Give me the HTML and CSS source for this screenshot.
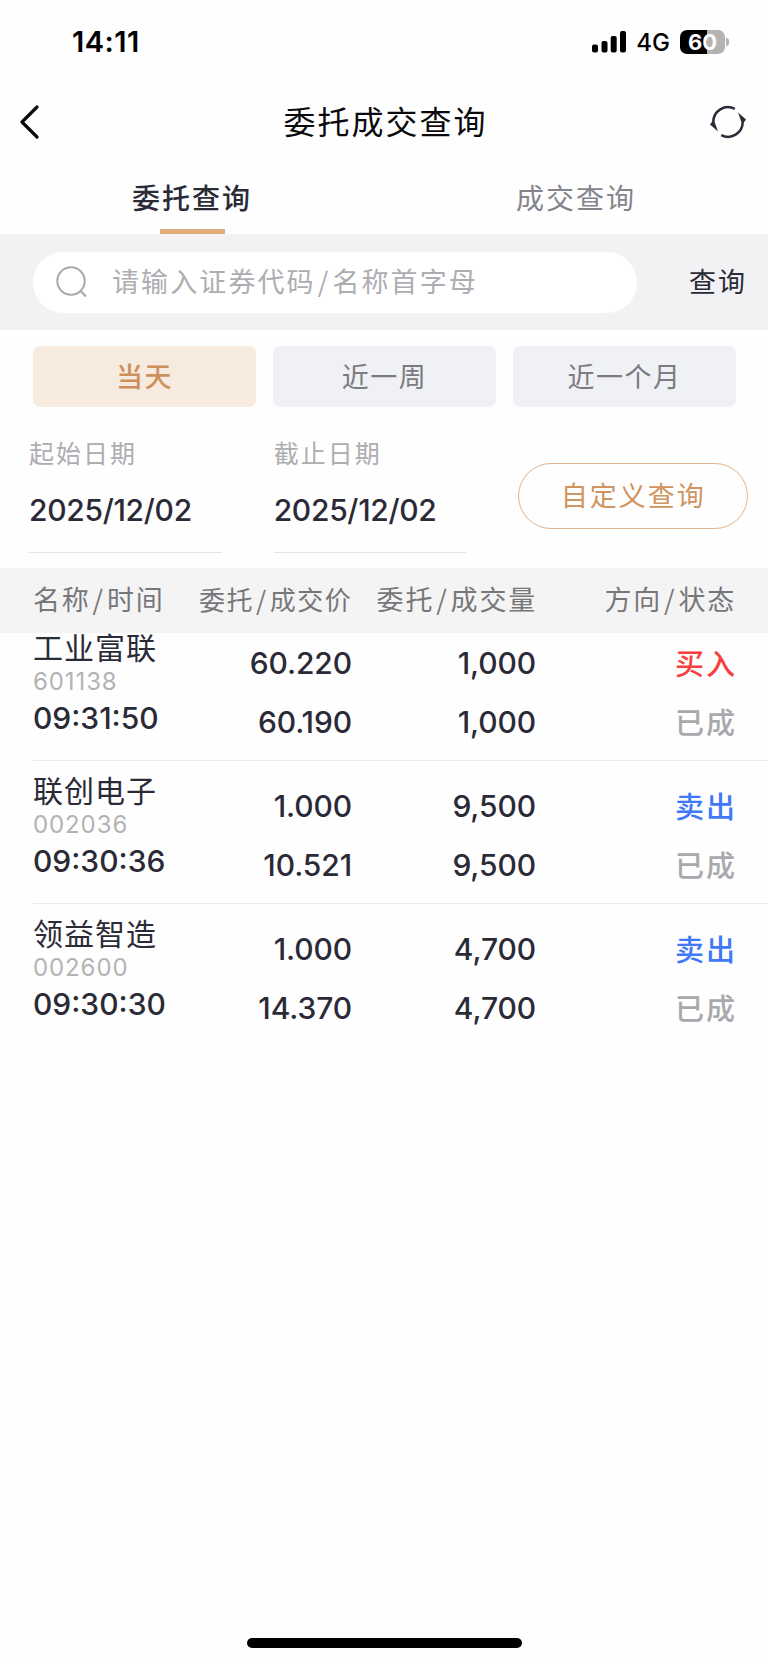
FILE: index.html
```
<!DOCTYPE html>
<html lang="zh-CN">
<head>
    <meta charset="UTF-8">
    <meta name="viewport" content="width=device-width, initial-scale=1.0">
    <title>委托成交查询</title>
    <link rel="stylesheet" href="styles.css">
</head>
<body>
    <div class="status-bar">
        <span class="clock">14:11</span>
        <div class="status-right">
            <svg class="signal" width="34" height="22" viewBox="0 0 34 22">
                <rect x="0" y="13.5" width="6" height="8" rx="2"/>
                <rect x="9.5" y="10" width="6" height="11.5" rx="2"/>
                <rect x="18.7" y="5" width="6" height="16.5" rx="2"/>
                <rect x="28" y="0" width="6" height="21.5" rx="2"/>
            </svg>
            <span class="network">4G</span>
            <div class="battery"><span>60</span></div>
            <div class="battery-cap"></div>
        </div>
    </div>

    <div class="nav-bar">
        <svg class="back" width="20" height="34" viewBox="0 0 20 34">
            <path d="M18 2 L3 17 L18 32" fill="none" stroke="#0a0a0c" stroke-width="3.2" stroke-linecap="round" stroke-linejoin="round"/>
        </svg>
        <h1>委托成交查询</h1>
        <svg class="refresh" width="40" height="36" viewBox="0 0 40 36">
            <path d="M5.3 18 A14.7 14.7 0 0 1 26.8 4.9" fill="none" stroke="#2b2a37" stroke-width="2.5"/>
            <path d="M34.7 18 A14.7 14.7 0 0 1 13.2 31.1" fill="none" stroke="#2b2a37" stroke-width="2.5"/>
            <path d="M30 8.6 L38 15.4 L35.8 18.4 L33.4 18 Z M10 27.4 L2 20.6 L4.2 17.6 L6.6 18 Z" fill="#2b2a37"/>
        </svg>
    </div>

    <div class="tabs">
        <div class="tab active">委托查询</div>
        <div class="tab">成交查询</div>
    </div>

    <div class="search-bar">
        <div class="search-box">
            <svg width="32" height="34" viewBox="0 0 32 34">
                <circle cx="15" cy="16" r="13.7" fill="none" stroke="#a9a9ae" stroke-width="2"/>
                <path d="M24 25.5 L30 31.5" stroke="#a9a9ae" stroke-width="2.2"/>
            </svg>
            <span class="placeholder">请输入证券代码<i>/</i>名称首字母</span>
        </div>
        <span class="search-btn">查询</span>
    </div>

    <div class="ranges">
        <div class="range active">当天</div>
        <div class="range">近一周</div>
        <div class="range">近一个月</div>
    </div>

    <div class="dates">
        <div class="date">
            <label>起始日期</label>
            <div class="value">2025/12/02</div>
        </div>
        <div class="date">
            <label>截止日期</label>
            <div class="value">2025/12/02</div>
        </div>
        <div class="custom-btn">自定义查询</div>
    </div>

    <div class="table-head">
        <span class="h-name">名称<i>/</i>时间</span>
        <span class="h-price">委托<i>/</i>成交价</span>
        <span class="h-amount">委托<i>/</i>成交量</span>
        <span class="h-side">方向<i>/</i>状态</span>
    </div>

    <div class="orders">
        <div class="order">
            <div class="stock">
                <div class="name">工业富联</div>
                <div class="code">601138</div>
                <div class="time">09:31:50</div>
            </div>
            <div class="num">60.220<br>60.190</div>
            <div class="num">1,000<br>1,000</div>
            <div class="side"><span class="buy">买入</span><br>已成</div>
        </div>
        <div class="order">
            <div class="stock">
                <div class="name">联创电子</div>
                <div class="code">002036</div>
                <div class="time">09:30:36</div>
            </div>
            <div class="num">1.000<br>10.521</div>
            <div class="num">9,500<br>9,500</div>
            <div class="side"><span class="sell">卖出</span><br>已成</div>
        </div>
        <div class="order">
            <div class="stock">
                <div class="name">领益智造</div>
                <div class="code">002600</div>
                <div class="time">09:30:30</div>
            </div>
            <div class="num">1.000<br>14.370</div>
            <div class="num">4,700<br>4,700</div>
            <div class="side"><span class="sell">卖出</span><br>已成</div>
        </div>
    </div>

    <div class="home-indicator"></div>
</body>
</html>
```

FILE: styles.css
```
* {
    box-sizing: border-box;
}

body {
    font-family: "Noto Sans CJK SC", "Inter", sans-serif;
    background: #fefefe;
    color: #2b2a37;
    width: 768px;
    height: 1664px;
    margin: 0;
    display: flex;
    flex-direction: column;
    overflow: hidden;
}

i {
    font-style: normal;
    margin: 0 2px;
}

/* Status bar */
.status-bar {
    height: 84px;
    display: flex;
    justify-content: space-between;
    padding: 0 39px 0 72px;
    font-family: "Inter", sans-serif;
    color: #000;
}

.clock {
    font-size: 29px;
    font-weight: 600;
    letter-spacing: 0.5px;
    line-height: 84px;
}

.status-right {
    display: flex;
    align-items: center;
    height: 83px;
}

.network {
    font-size: 24px;
    font-weight: 500;
    margin: 2px 10px 0 10px;
}

.battery {
    width: 45px;
    height: 24px;
    border-radius: 7px;
    background: linear-gradient(to right, #000 59%, #b3b3b3 59%);
    color: #fff;
    font-size: 22px;
    font-weight: 700;
    line-height: 24px;
    text-align: center;
}

.battery-cap {
    width: 3px;
    height: 8px;
    margin-left: 1px;
    border-radius: 0 3px 3px 0;
    background: #b3b3b3;
}

/* Navigation */
.nav-bar {
    height: 76px;
    display: flex;
    align-items: center;
    justify-content: space-between;
    padding: 0 20px 0 19px;
}

.back {
    margin-right: 24px;
}

h1 {
    margin: 0;
    padding-bottom: 5px;
    font-size: 32px;
    font-weight: 400;
    letter-spacing: 2px;
    color: #0a0a0c;
}

.tabs {
    height: 74px;
    display: flex;
}

.tab {
    flex: 1;
    display: flex;
    flex-direction: column;
    align-items: center;
    padding-top: 5px;
    font-size: 28px;
    letter-spacing: 2px;
    line-height: 64px;
    color: #85848c;
}

.tab.active {
    font-weight: 500;
    color: #2b2a37;
}

.tab.active::after {
    content: "";
    width: 65px;
    height: 6px;
    background: #e2ab7a;
}

/* Search */
.search-bar {
    height: 96px;
    display: flex;
    align-items: center;
    justify-content: space-between;
    padding: 0 21px 0 33px;
    background: #f2f2f5;
}

.search-box {
    width: 604px;
    height: 61px;
    display: flex;
    align-items: center;
    padding-left: 23px;
    border-radius: 31px;
    background: #fff;
}

.placeholder {
    margin-left: 24px;
    padding-bottom: 3px;
    font-size: 27px;
    letter-spacing: 2.1px;
    color: #adadb2;
}

.search-btn {
    padding-bottom: 3px;
    font-size: 27px;
    letter-spacing: 2px;
}

/* Quick ranges */
.ranges {
    display: flex;
    gap: 17px;
    padding: 16px 32px 0 33px;
}

.range {
    flex: 1;
    height: 61px;
    border-radius: 7px;
    background: #f0f1f4;
    color: #7c7b82;
    font-size: 27px;
    letter-spacing: 1.5px;
    line-height: 59px;
    text-align: center;
}

.range.active {
    background: #f7eade;
    color: #cc905c;
    font-weight: 500;
}

/* Dates */
.dates {
    height: 161px;
    display: flex;
    padding: 27px 20px 0 29px;
}

.date {
    width: 193px;
    height: 119px;
    margin-right: 52px;
    border-bottom: 1.5px solid #e3e3e9;
}

.date label {
    display: block;
    font-size: 25px;
    letter-spacing: 2px;
    line-height: 36px;
    color: #adadb2;
}

.date .value {
    font-family: "Inter", sans-serif;
    font-size: 30px;
    font-weight: 500;
    letter-spacing: -0.3px;
    line-height: 38px;
    margin-top: 21px;
}

.custom-btn {
    width: 230px;
    height: 66px;
    margin-top: 29px;
    border: 1.5px solid #e0b48c;
    border-radius: 33px;
    color: #d0945f;
    font-size: 27px;
    letter-spacing: 2px;
    line-height: 61px;
    text-align: center;
}

/* Orders */
.table-head,
.order {
    display: grid;
    grid-template-columns: 166px 153px 184px 199px;
    padding-left: 33px;
}

.table-head {
    position: relative;
    z-index: 1;
    height: 65px;
    background: #f4f4f4;
    color: #77777a;
    font-size: 27px;
    line-height: 62px;
    letter-spacing: 1.8px;
    white-space: nowrap;
}

.h-price {
    font-size: 26px;
    letter-spacing: 1.5px;
    text-align: right;
}

.h-amount,
.h-side {
    text-align: right;
    margin-right: -1px;
}

.orders {
    margin-top: -15px;
}

.order {
    height: 143px;
    position: relative;
}

.order:not(:last-child)::after {
    content: "";
    position: absolute;
    left: 33px;
    right: 0;
    bottom: 0;
    height: 1px;
    background: #ebebed;
}

.stock {
    padding: 8px 0 0 0;
    white-space: nowrap;
}

.name {
    font-size: 30px;
    letter-spacing: 1px;
    line-height: 40px;
}

.code {
    margin-top: 2px;
    font-family: "Inter", sans-serif;
    font-size: 24px;
    letter-spacing: 0.9px;
    line-height: 28px;
    color: #b3b3b7;
}

.time {
    font-family: "Inter", sans-serif;
    font-size: 30px;
    font-weight: 500;
    line-height: 44px;
}

.num {
    padding-top: 16px;
    font-family: "Inter", sans-serif;
    font-size: 30px;
    font-weight: 500;
    letter-spacing: -0.1px;
    line-height: 59px;
    text-align: right;
}

.side {
    padding-top: 15px;
    margin-right: -2px;
    font-size: 29px;
    font-weight: 500;
    letter-spacing: 2px;
    line-height: 59px;
    text-align: right;
    color: #a9a9ad;
}

.buy {
    color: #f7403f;
}

.sell {
    color: #3f78f8;
}

.home-indicator {
    width: 275px;
    height: 10px;
    margin: auto auto 16px 247px;
    border-radius: 5px;
    background: #000;
}
```
